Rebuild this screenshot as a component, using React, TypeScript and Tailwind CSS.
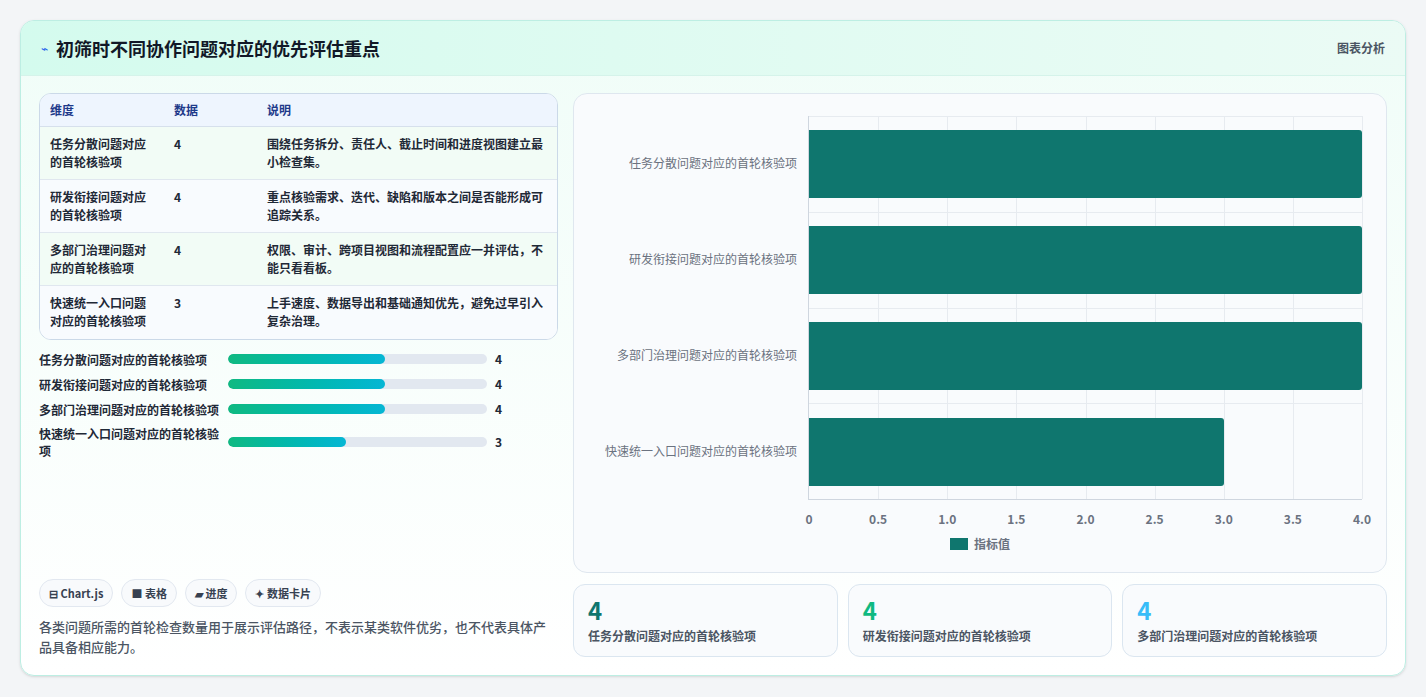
import React from "react";

const rows = [
  ["任务分散问题对应的首轮核验项", 4, "围绕任务拆分、责任人、截止时间和进度视图建立最小检查集。"],
  ["研发衔接问题对应的首轮核验项", 4, "重点核验需求、迭代、缺陷和版本之间是否能形成可追踪关系。"],
  ["多部门治理问题对应的首轮核验项", 4, "权限、审计、跨项目视图和流程配置应一并评估，不能只看看板。"],
  ["快速统一入口问题对应的首轮核验项", 3, "上手速度、数据导出和基础通知优先，避免过早引入复杂治理。"],
] as const;

const tableNames = [
  ["任务分散问题对应", "的首轮核验项"],
  ["研发衔接问题对应", "的首轮核验项"],
  ["多部门治理问题对", "应的首轮核验项"],
  ["快速统一入口问题", "对应的首轮核验项"],
];

export default function App() {
  const ticks = ["0", "0.5", "1.0", "1.5", "2.0", "2.5", "3.0", "3.5", "4.0"];
  return (
    <div className="w-[1426px] h-[697px] bg-[#f3f5f7] pt-[20px] px-[20px]" style={{ fontFamily: '"Noto Sans CJK SC", "Noto Sans", sans-serif' }}>
      <div className="w-[1386px] h-[656px] rounded-[14px] border border-[#bdeee3] bg-gradient-to-b from-[#f0fdf8] to-white overflow-hidden flex flex-col shadow-sm">
        <div className="h-[55px] flex items-center justify-between px-[20px] bg-gradient-to-r from-[#d4fbee] to-[#ebfbf5] border-b border-[#d5f3ea] shrink-0">
          <div className="flex items-center gap-[8px]">
            <span className="text-[#2563eb] text-[12px]">⌁</span>
            <span className="text-[18px] font-bold text-[#111827]">初筛时不同协作问题对应的优先评估重点</span>
          </div>
          <span className="text-[12px] font-bold text-[#4b5563]">图表分析</span>
        </div>
        <div className="flex gap-[15px] px-[18px] pt-[17px] flex-1">
          <div className="w-[519px] flex flex-col">
            <div className="rounded-[12px] border border-[#cbd9e8] overflow-hidden bg-white">
              <div className="flex h-[33px] items-center bg-[#eef5fe] border-b border-[#d6e0ec] text-[12px] font-bold text-[#1e3a8a]">
                <div className="w-[134px] pl-[10px]">维度</div>
                <div className="w-[93px]">数据</div>
                <div className="flex-1">说明</div>
              </div>
              {rows.map((r, i) => (
                <div key={i} className={`flex h-[53px] pt-[8px] text-[12px] leading-[18px] font-semibold text-[#1f2937] ${i < 3 ? "border-b border-[#e0e7ef]" : ""} ${i % 2 === 0 ? "bg-[#f2fcf6]" : "bg-[#f8fbfe]"}`}>
                  <div className="w-[134px] pl-[10px]">{tableNames[i][0]}<br />{tableNames[i][1]}</div>
                  <div className="w-[93px]">{r[1]}</div>
                  <div className="flex-1 pr-[8px]">{r[2]}</div>
                </div>
              ))}
            </div>
            <div className="flex flex-col gap-[7px] mt-[10px]">
              {rows.map((r, i) => (
                <div key={i} className="flex items-center">
                  <div className="w-[189px] text-[12px] leading-[17px] font-semibold text-[#1f2937]">{r[0]}</div>
                  <div className="w-[259px] h-[10px] rounded-full bg-[#e2e8f0] overflow-hidden">
                    <div className="h-full rounded-full bg-gradient-to-r from-[#10b981] to-[#06b6d4]" style={{ width: `${(Number(r[1]) / 6.6) * 100}%` }} />
                  </div>
                  <div className="ml-[8px] text-[12px] font-bold text-[#1f2937]">{r[1]}</div>
                </div>
              ))}
            </div>
            <div className="mt-auto flex gap-[8px]">
              {["⊟ Chart.js", "■ 表格", "▰ 进度", "✦ 数据卡片"].map((c) => (
                <span key={c} className="h-[28px] px-[9px] flex items-center rounded-full border border-[#e2e8f0] bg-[#f8fafc] text-[11px] font-bold text-[#374151]">{c}</span>
              ))}
            </div>
            <p className="mt-[10px] mb-[18px] text-[13px] leading-[20px] text-[#4b5563] font-medium">各类问题所需的首轮检查数量用于展示评估路径，不表示某类软件优劣，也不代表具体产品具备相应能力。</p>
          </div>
          <div className="flex-1 flex flex-col gap-[11px] pb-[18px]">
            <div className="h-[480px] rounded-[14px] border border-[#dfe7ef] bg-[#f9fbfd] relative">
              <div className="absolute left-[234px] top-[22px] w-[554px] h-[384px] border-l border-b border-[#cfd6df]">
                {[1,2,3,4,5,6,7,8].map((k) => (
                  <div key={k} className="absolute top-0 bottom-0 border-l border-[#e7ebf0]" style={{ left: `${k * 12.5}%` }} />
                ))}
                {[0,1,2,3].map((k) => (
                  <div key={k} className="absolute left-0 right-0 border-t border-[#e7ebf0]" style={{ top: `${k * 25}%` }} />
                ))}
                {rows.map((r, i) => (
                  <div key={i} className="absolute left-0 h-[68px] bg-[#0f766e] rounded-r-[3px]" style={{ top: `${i * 96 + 14}px`, width: `${(Number(r[1]) / 4) * 100}%` }} />
                ))}
                {rows.map((r, i) => (
                  <div key={i} className="absolute right-[565px] whitespace-nowrap text-[12px] text-[#6b7280]" style={{ top: `${i * 96 + 38}px` }}>{r[0]}</div>
                ))}
                {ticks.map((t, k) => (
                  <div key={t} className="absolute top-[394px] -translate-x-1/2 text-[12px] font-semibold text-[#6b7280]" style={{ left: `${k * 12.5}%` }}>{t}</div>
                ))}
              </div>
              <div className="absolute top-[441px] left-[376px] flex items-center gap-[6px] text-[12px] font-semibold text-[#6b7280]">
                <span className="w-[18px] h-[12px] bg-[#0f766e] inline-block" />指标值
              </div>
            </div>
            <div className="flex gap-[10px]">
              {[["#0f766e", rows[0][0]], ["#10b981", rows[1][0]], ["#38bdf8", rows[2][0]]].map(([c, l]) => (
                <div key={l} className="flex-1 h-[73px] rounded-[12px] border border-[#dbe6f0] bg-[#f9fbfd] px-[14px] pt-[10px]">
                  <div className="text-[24px] leading-[30px] font-bold" style={{ color: c }}>4</div>
                  <div className="text-[12px] font-semibold text-[#4b5563] mt-[2px]">{l}</div>
                </div>
              ))}
            </div>
          </div>
        </div>
      </div>
    </div>
  );
}
